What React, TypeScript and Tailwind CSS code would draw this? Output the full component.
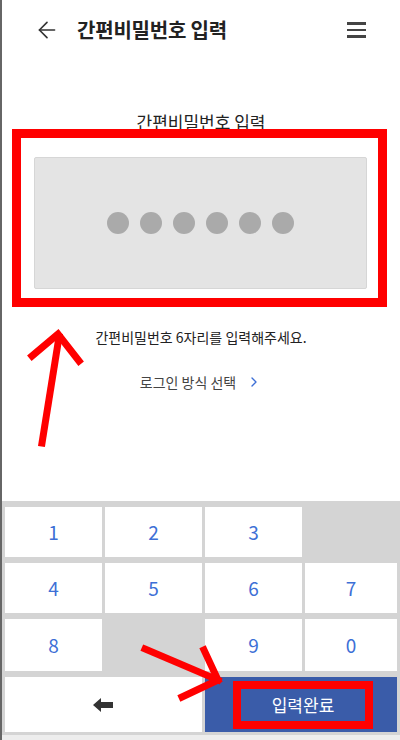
import { ArrowLeft, ChevronRight } from "lucide-react";

const font = { fontFamily: '"Noto Sans CJK KR", "Noto Sans", sans-serif' };

function Key({ label }: { label: string }) {
  return (
    <div className="bg-white flex items-center justify-center text-[19px] text-[#3d6fd6]">
      {label}
    </div>
  );
}

export default function App() {
  return (
    <div
      className="relative w-[400px] h-[740px] overflow-hidden bg-white border-l-2 border-[#666] flex flex-col"
      style={font}
    >
      {/* Header */}
      <div className="h-[60px] shrink-0 flex items-center pl-[32px] pr-[34px]">
        <ArrowLeft className="w-[26px] h-[26px] text-[#333]" strokeWidth={1.5} />
        <h1 className="ml-[17px] text-[20px] font-bold text-[#222] tracking-[-0.2px]">
          간편비밀번호 입력
        </h1>
        <div className="ml-auto flex flex-col gap-[4px]">
          <span className="block w-[19px] h-[2.5px] bg-[#444]" />
          <span className="block w-[19px] h-[2.5px] bg-[#444]" />
          <span className="block w-[19px] h-[2.5px] bg-[#444]" />
        </div>
      </div>

      {/* Title */}
      <p className="mt-[52px] text-center text-[17px] leading-[20px] text-[#222]">
        간편비밀번호 입력
      </p>

      {/* Password box with red highlight */}
      <div className="relative -mt-[3px] ml-[10px] w-[375px] h-[178px] border-[9px] border-[#ff0000] pl-[13px] pr-[11px] pt-[19px] pb-[9px]">
        <div className="w-full h-full rounded-[2px] bg-[#e4e4e4] border border-[#d6d6d6] flex items-center justify-center gap-[11px]">
          {[0, 1, 2, 3, 4, 5].map((i) => (
            <span key={i} className="block w-[22px] h-[22px] rounded-full bg-[#aaaaaa]" />
          ))}
        </div>
      </div>

      <p className="mt-[20px] text-center text-[14px] leading-[20px] text-[#222]">
        간편비밀번호 6자리를 입력해주세요.
      </p>

      <div className="mt-[25px] flex items-center justify-center gap-[10px] text-[14px] leading-[20px] text-[#444]">
        <span>로그인 방식 선택</span>
        <ChevronRight className="w-[16px] h-[16px] text-[#3d6fd6]" strokeWidth={2} />
      </div>

      {/* Keypad */}
      <div className="mt-auto h-[239px] bg-[#d4d4d4] flex flex-col">
        <div className="pt-[6px] pl-[3px] pb-[3px]">
          <div className="grid grid-cols-[97px_97px_97px_92px] grid-rows-[50px_50px_52px_55px] gap-x-[3px] gap-y-[6px]">
            <Key label="1" />
            <Key label="2" />
            <Key label="3" />
            <div />
            <Key label="4" />
            <Key label="5" />
            <Key label="6" />
            <Key label="7" />
            <Key label="8" />
            <div />
            <Key label="9" />
            <Key label="0" />
            <div className="col-span-2 bg-white flex items-center justify-center">
              <svg width="21" height="14" viewBox="0 0 21 14">
                <path d="M0 7 L8 0 L8 4 L20 4 L20 10 L8 10 L8 14 Z" fill="#333" />
              </svg>
            </div>
            <div className="col-span-2 bg-[#3a5ca9] flex items-center justify-center pl-[4px]">
              <div className="w-[140px] h-[48px] border-[8px] border-[#ff0000] flex items-center justify-center text-white text-[17px]">
                입력완료
              </div>
            </div>
          </div>
        </div>
        <div className="flex-1 bg-[#ededed]" />
      </div>

      {/* Red annotation arrows */}
      <svg
        className="absolute left-0 top-0 pointer-events-none"
        width="400"
        height="740"
        viewBox="0 0 400 740"
      >
        <g stroke="#ff0000" strokeWidth="7" fill="none" strokeLinecap="square">
          <line x1="40" y1="443" x2="57" y2="337" />
          <polyline points="30,356 56,334 77,361" />
          <line x1="143" y1="649" x2="216" y2="680" />
          <polyline points="202,650 216,680 180,697" />
        </g>
      </svg>
    </div>
  );
}
